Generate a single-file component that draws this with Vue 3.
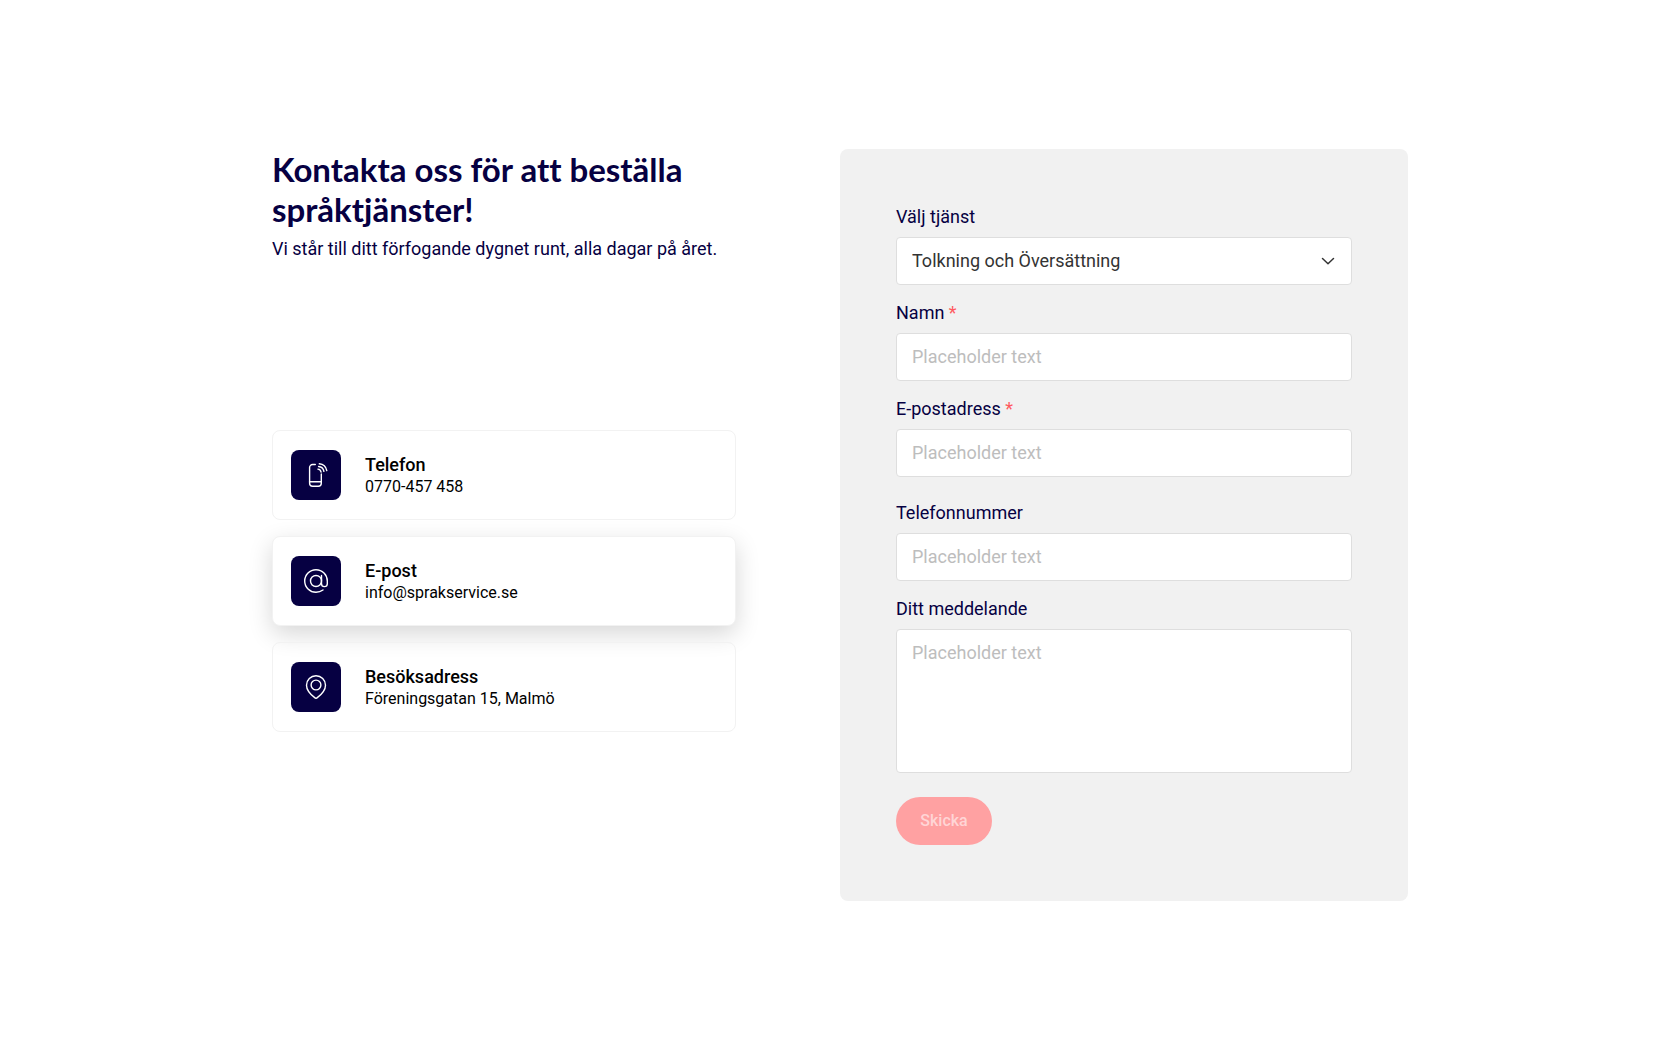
<script setup>
import { reactive } from 'vue'

const form = reactive({
  service: 'both',
  name: '',
  email: '',
  phone: '',
  message: ''
})

const services = [
  { value: 'both', label: 'Tolkning och Översättning' },
  { value: 'interpreting', label: 'Tolkning' },
  { value: 'translation', label: 'Översättning' }
]

const contacts = [
  { id: 'phone', title: 'Telefon', text: '0770-457 458', href: 'tel:0770457458' },
  { id: 'email', title: 'E-post', text: 'info@sprakservice.se', href: 'mailto:info@sprakservice.se', raised: true },
  { id: 'address', title: 'Besöksadress', text: 'Föreningsgatan 15, Malmö', href: '#karta' }
]
</script>

<template>
  <main class="page">
    <div class="layout">
      <section class="intro">
        <h1 class="title">Kontakta oss för att beställa språktjänster!</h1>
        <p class="lead">Vi står till ditt förfogande dygnet runt, alla dagar på året.</p>

        <div class="contacts">
          <a
            v-for="contact in contacts"
            :key="contact.id"
            :href="contact.href"
            class="contact"
            :class="{ raised: contact.raised }"
          >
            <span class="badge">
              <svg v-if="contact.id === 'phone'" width="24" height="24" viewBox="0 0 24 24" aria-hidden="true">
                <path d="M11.300 1.500H8.600a3 3 0 0 0-3 3v15.800a3 3 0 0 0 3 3h5.700a3 3 0 0 0 3-3V11" />
                <path d="M5.600 18.800h11.700" />
                <path d="M15.300.8a8.600 8.600 0 0 1 7.500 6.800M14.600 3.500a6 6 0 0 1 5.300 4.900M13.900 6.100a3.600 3.600 0 0 1 3.200 3" />
              </svg>
              <svg v-else-if="contact.id === 'email'" width="24" height="24" viewBox="0 0 24 24" aria-hidden="true">
                <circle cx="12" cy="12" r="5.500" />
                <path d="M17.500 6.500v8.200a2.900 2.900 0 0 0 5.800 0V12A11.300 11.300 0 1 0 12 23.300c2.700 0 5-.8 7-2.300" />
              </svg>
              <svg v-else width="24" height="24" viewBox="0 0 24 24" aria-hidden="true">
                <path d="M12 .7a9.500 9.500 0 0 1 9.500 9.500c0 5.200-6 10.800-8.500 12.700a1.600 1.600 0 0 1-2 0C8.500 21 2.500 15.400 2.500 10.200A9.500 9.500 0 0 1 12 .7Z" />
                <circle cx="12" cy="10" r="4.900" />
              </svg>
            </span>
            <span class="details">
              <strong class="contact-title">{{ contact.title }}</strong>
              <span class="contact-text">{{ contact.text }}</span>
            </span>
          </a>
        </div>
      </section>

      <form class="panel" @submit.prevent>
        <div class="field">
          <label for="service">Välj tjänst</label>
          <div class="select-wrap">
            <select id="service" v-model="form.service" class="control">
              <option v-for="service in services" :key="service.value" :value="service.value">
                {{ service.label }}
              </option>
            </select>
            <svg class="chevron" width="16" height="16" viewBox="0 0 16 16" aria-hidden="true">
              <path d="m2.500 5.500 5.500 5.200 5.500-5.200" />
            </svg>
          </div>
        </div>

        <div class="field">
          <label for="name">Namn <span class="required">*</span></label>
          <input id="name" v-model="form.name" class="control" type="text" placeholder="Placeholder text" />
        </div>

        <div class="field">
          <label for="email">E-postadress <span class="required">*</span></label>
          <input id="email" v-model="form.email" class="control" type="email" placeholder="Placeholder text" />
        </div>

        <div class="field separated">
          <label for="phone">Telefonnummer</label>
          <input id="phone" v-model="form.phone" class="control" type="tel" placeholder="Placeholder text" />
        </div>

        <div class="field">
          <label for="message">Ditt meddelande</label>
          <textarea id="message" v-model="form.message" class="control" placeholder="Placeholder text"></textarea>
        </div>

        <button class="submit" type="submit" disabled>Skicka</button>
      </form>
    </div>
  </main>
</template>

<style>
body {
  margin: 0;
  background: #fff;
}
</style>

<style scoped>
.page,
.page * {
  box-sizing: border-box;
}

.page {
  display: flex;
  align-items: center;
  justify-content: center;
  min-height: 100vh;
  padding: 48px 32px;
  color: #060042;
  font-family: Roboto, "Liberation Sans", sans-serif;
  font-size: 18px;
  line-height: 24px;
}

.layout {
  display: grid;
  grid-template-columns: 1fr 1fr;
  width: 100%;
  max-width: 1136px;
}

.intro {
  padding-right: 104px;
}

.title {
  margin: 0;
  font-family: Lato, "Open Sans", sans-serif;
  font-size: 33px;
  font-weight: 700;
  font-variant-ligatures: none;
  line-height: 40px;
}

.lead {
  margin: 8px 0 0;
}

.contacts {
  display: flex;
  flex-direction: column;
  gap: 16px;
  margin-top: 169px;
}

.contact {
  display: flex;
  align-items: center;
  gap: 24px;
  min-height: 90px;
  padding: 18px;
  border: 1px solid #f2f2f2;
  border-radius: 8px;
  color: #000;
  text-decoration: none;
}

.raised {
  background: #fff;
  box-shadow: 0 8px 24px rgba(0, 0, 0, 0.16);
}

.badge {
  display: flex;
  flex: none;
  align-items: center;
  justify-content: center;
  width: 50px;
  height: 50px;
  border-radius: 8px;
  background: #060042;
}

.badge svg {
  fill: none;
  stroke: #fff;
  stroke-width: 1.4;
  stroke-linecap: round;
  stroke-linejoin: round;
}

.details {
  display: flex;
  flex-direction: column;
}

.contact-title {
  font-weight: 500;
  line-height: 24px;
}

.contact-text {
  font-size: 16px;
  line-height: 20px;
}

.panel {
  padding: 56px;
  border-radius: 8px;
  background: #f1f1f1;
}

.field {
  display: flex;
  flex-direction: column;
  gap: 8px;
}

.field + .field {
  margin-top: 16px;
}

.field + .separated {
  margin-top: 24px;
}

.required {
  color: #ff5a5f;
}

.select-wrap {
  position: relative;
}

.control {
  display: block;
  width: 100%;
  height: 48px;
  margin: 0;
  padding: 0 15px;
  border: 1px solid #dedede;
  border-radius: 4px;
  outline: none;
  background: #fff;
  color: #333;
  font: inherit;
  appearance: none;
}

input.control {
  padding-bottom: 2px;
}

.control::placeholder {
  color: #bdbdbd;
  opacity: 1;
}

textarea.control {
  height: 144px;
  padding: 11px 15px;
  resize: none;
}

.chevron {
  position: absolute;
  top: 16px;
  right: 16px;
  fill: none;
  stroke: #333;
  stroke-width: 1.5;
  stroke-linecap: round;
  stroke-linejoin: round;
  pointer-events: none;
}

.submit {
  display: block;
  min-width: 96px;
  height: 48px;
  margin: 24px 0 0;
  padding: 0 24px 2px;
  border: 0;
  border-radius: 24px;
  background: #ffa1a2;
  color: #ffd5d6;
  font-family: inherit;
  font-size: 16px;
  font-weight: 500;
}

@media (max-width: 900px) {
  .layout {
    grid-template-columns: 1fr;
    gap: 48px;
  }

  .intro {
    padding-right: 0;
  }

  .contacts {
    margin-top: 48px;
  }
}
</style>
